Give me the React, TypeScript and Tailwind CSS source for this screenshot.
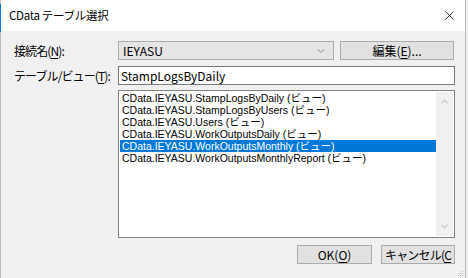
import { X, ChevronDown, ChevronUp } from 'lucide-react';

const items = [
  'CData.IEYASU.StampLogsByDaily (ビュー)',
  'CData.IEYASU.StampLogsByUsers (ビュー)',
  'CData.IEYASU.Users (ビュー)',
  'CData.IEYASU.WorkOutputsDaily (ビュー)',
  'CData.IEYASU.WorkOutputsMonthly (ビュー)',
  'CData.IEYASU.WorkOutputsMonthlyReport (ビュー)',
];

const uiFont = { fontFamily: '"Noto Sans CJK JP", sans-serif' };
const listFont = { fontFamily: '"Liberation Sans", "Noto Sans CJK JP", sans-serif' };

const Label = ({ text, mnemonic }: { text: string; mnemonic: string }) => (
  <div className="w-[104px] shrink-0 text-[12px] text-black tracking-[-0.9px]">
    {text}(<span className="underline underline-offset-2">{mnemonic}</span>):
  </div>
);

export default function App() {
  return (
    <div
      className="relative h-[278px] w-[468px] overflow-hidden bg-[#f0f0f0] text-black"
      style={uiFont}
    >
      <div className="flex h-full w-[466px] flex-col border-l border-r border-[#b9b9b9]">
        {/* title bar */}
        <div className="flex h-[31px] items-center justify-between bg-white pl-[8px] pr-[8px]">
          <span className="text-[11.5px] tracking-[-0.3px]">CData テーブル選択</span>
          <X size={15} strokeWidth={1.2} className="text-black" />
        </div>

        <div className="flex flex-col pl-[13px] pt-[10px]">
          {/* connection row */}
          <div className="flex h-[19px] items-center">
            <Label text="接続名" mnemonic="N" />
            <div className="flex h-[19px] w-[216px] items-center justify-between border border-[#adadad] bg-[#e5e5e5] pl-[4px] pr-[6px] text-[12px]">
              <span className="leading-none">IEYASU</span>
              <ChevronDown size={12} strokeWidth={1.3} className="text-[#606060]" />
            </div>
            <div className="ml-[6px] flex h-[19px] w-[114px] items-center justify-center border border-[#adadad] bg-[#e1e1e1] text-[12px]">
              編集(<span className="underline underline-offset-2">E</span>)...
            </div>
          </div>

          {/* table row */}
          <div className="mt-[6px] flex h-[19px] items-center">
            <Label text="テーブル/ビュー" mnemonic="T" />
            <div className="flex h-[19px] w-[337px] items-center border border-[#7a7a7a] bg-white pl-[2px] text-[12px]">
              StampLogsByDaily
            </div>
          </div>

          {/* list */}
          <div className="mt-[5px] flex">
            <div className="w-[104px] shrink-0" />
            <div className="flex h-[148px] w-[337px] border border-[#828282] bg-white p-[1px]">
              <div className="flex flex-1 flex-col" style={listFont}>
                {items.map((item, i) => (
                  <div
                    key={item}
                    className={
                      i === 4
                        ? 'h-[12px] whitespace-nowrap bg-[#0078d7] pl-[2px] text-[10.5px] leading-[12px] text-white'
                        : 'h-[12px] whitespace-nowrap pl-[2px] text-[10.5px] leading-[12px] text-black'
                    }
                  >
                    {item}
                  </div>
                ))}
              </div>
              <div className="flex w-[17px] flex-col items-center justify-between bg-[#f0f0f0] py-[4px]">
                <ChevronUp size={11} strokeWidth={2.2} className="text-[#c0c0c0]" />
                <ChevronDown size={11} strokeWidth={2.2} className="text-[#c0c0c0]" />
              </div>
            </div>
          </div>

          {/* buttons */}
          <div className="mt-[7px] flex justify-end gap-[9px] pr-[10px]">
            <div className="flex h-[19px] w-[75px] items-center justify-center border border-[#adadad] bg-[#e1e1e1] text-[12px]">
              OK(<span className="underline underline-offset-2">O</span>)
            </div>
            <div className="flex h-[19px] w-[74px] items-center justify-center overflow-hidden whitespace-nowrap border border-[#adadad] bg-[#e1e1e1] text-[12px] tracking-[-0.8px]">
              キャンセル(<span className="underline underline-offset-2">C</span>
            </div>
          </div>
        </div>
      </div>

      {/* resize grip */}
      <div className="absolute bottom-[2px] right-[5px] grid grid-cols-3 gap-[1px]">
        {[0, 0, 1, 0, 1, 1, 1, 1, 1].map((on, i) => (
          <div key={i} className={on ? 'h-[1px] w-[1px] bg-[#b0b0b0]' : 'h-[1px] w-[1px]'} />
        ))}
      </div>
      <div className="absolute left-0 top-[4px] h-[28px] w-[1px] bg-[#0078d7]" />
    </div>
  );
}
